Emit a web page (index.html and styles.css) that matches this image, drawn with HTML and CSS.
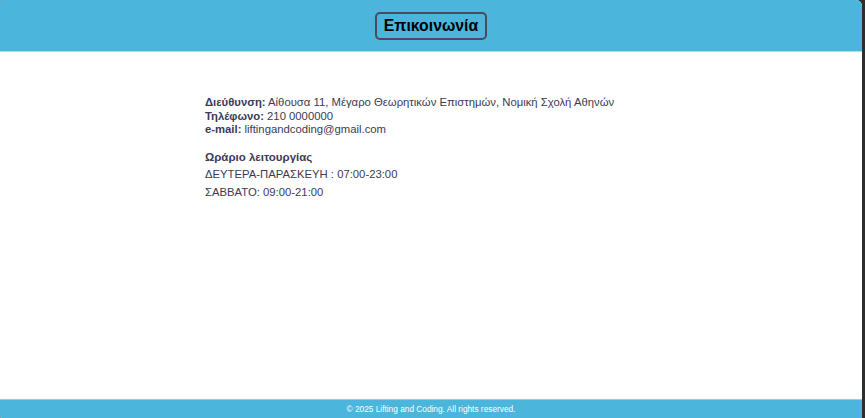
FILE: index.html
```html
<!DOCTYPE html>
<html lang="el">
<head>
<meta charset="utf-8">
<title>Επικοινωνία</title>
<link rel="stylesheet" href="styles.css">
</head>
<body>
<div class="window">
  <header class="site-header">
    <h1 class="page-title">Επικοινωνία</h1>
  </header>
  <main class="content">
    <section class="contact">
      <p class="info">
        <strong>Διεύθυνση:</strong> Αίθουσα 11, Μέγαρο Θεωρητικών Επιστημών, Νομική Σχολή Αθηνών<br>
        <strong>Τηλέφωνο:</strong> 210 0000000<br>
        <strong>e-mail:</strong> liftingandcoding@gmail.com
      </p>
      <h3 class="hours-title">Ωράριο λειτουργίας</h3>
      <p class="hours">ΔΕΥΤΕΡΑ-ΠΑΡΑΣΚΕΥΗ : 07:00-23:00</p>
      <p class="hours">ΣΑΒΒΑΤΟ: 09:00-21:00</p>
    </section>
  </main>
  <footer class="site-footer">© 2025 Lifting and Coding. All rights reserved.</footer>
</div>
</body>
</html>
```
FILE: styles.css
```css
html, body {
  margin: 0;
  padding: 0;
  height: 100%;
  background: #2e2e2e;
}
body {
  font-family: "Liberation Sans", Arial, sans-serif;
}
.window {
  width: 862px;
  height: 418px;
  background: #ffffff;
  border-radius: 2px 6px 0 2px;
  overflow: hidden;
  display: flex;
  flex-direction: column;
}
.site-header {
  height: 51px;
  background: #4bb5dc;
  border-bottom: 1px solid #a8dcef;
  display: flex;
  align-items: center;
  justify-content: center;
}
.page-title {
  margin: 0;
  font-size: 15.8px;
  font-weight: bold;
  color: #000;
  border: 2px solid #4a4a5c;
  border-radius: 5px;
  padding: 3px 7px;
  line-height: 18px;
}
.content {
  flex: 1;
  padding: 0 0 0 205px;
  color: #3b3b55;
}
.contact {
  padding-top: 44px;
  font-size: 11.3px;
}
.info {
  margin: 0;
  line-height: 13.5px;
}
.hours-title {
  margin: 13.5px 0 1px;
  font-size: 11.5px;
  line-height: 14px;
}
.hours {
  margin: 0;
  line-height: 18px;
}
.site-footer {
  height: 18px;
  background: #4bb5dc;
  border-top: 1px solid #8fd0ea;
  color: #fff;
  font-size: 8.3px;
  display: flex;
  align-items: center;
  justify-content: center;
}
```
